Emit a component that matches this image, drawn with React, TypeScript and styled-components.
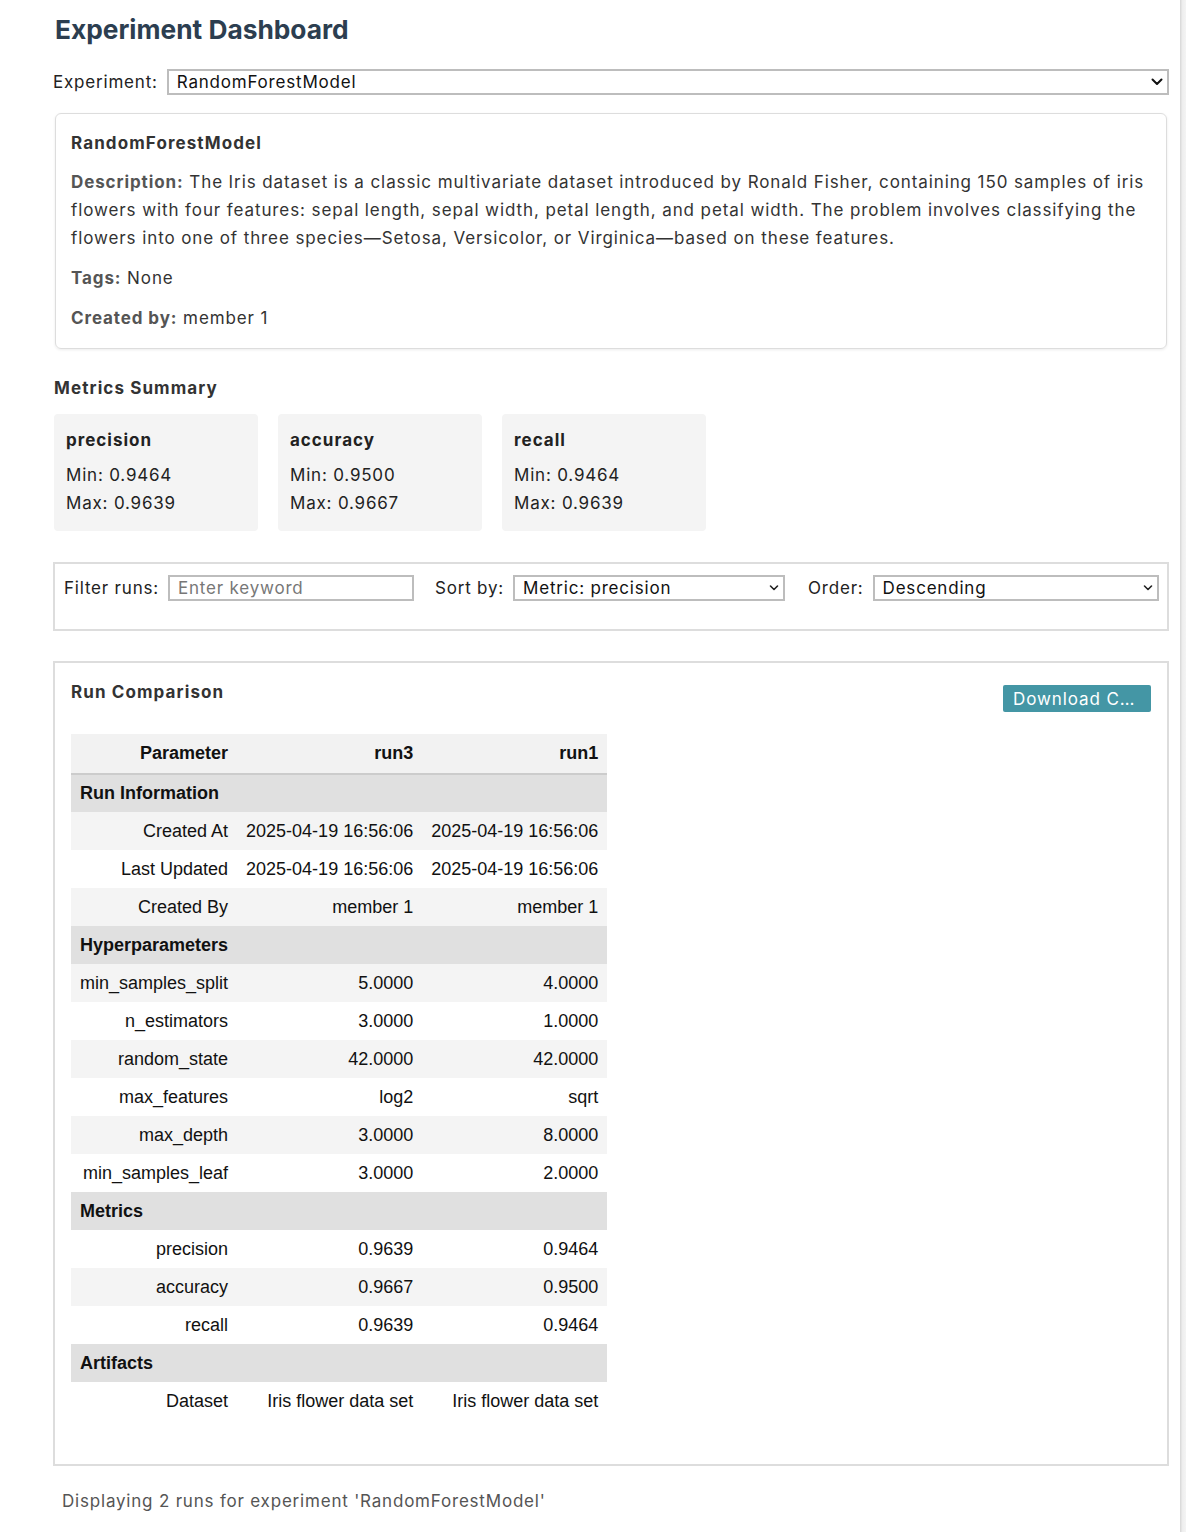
import React from "react";
import styled, { createGlobalStyle } from "styled-components";

const GlobalStyle = createGlobalStyle`
  html, body { margin: 0; padding: 0; background: #fff; }
  body { font-family: Inter, "Open Sans", sans-serif; color: #333; }
  * { box-sizing: border-box; }
`;

const ScrollEdge = styled.div`
  position: fixed;
  top: 0;
  right: 0;
  bottom: 0;
  width: 6px;
  background: linear-gradient(to right, #d6d6d6, #eeeeee 40%, #f4f4f4);
`;

const Page = styled.div`
  padding: 14px 17px 18px 53px;
  width: 1186px;
`;

const Title = styled.h1`
  margin: 0 0 23px 2px;
  font-size: 26.3px;
  line-height: 32px;
  font-weight: 700;
  color: #2c3e50;
`;

const Row = styled.div`
  display: flex;
  align-items: center;
  gap: 9px;
`;

const Label = styled.label`
  font-size: 17px;
  letter-spacing: 0.8px;
  color: #222;
  white-space: nowrap;
`;

const SelectWrap = styled.div<{ $w?: number; $flex?: boolean }>`
  position: relative;
  height: 26px;
  ${(p) => (p.$flex ? "flex: 1;" : `width: ${p.$w}px;`)}
`;

const Select = styled.select`
  appearance: none;
  width: 100%;
  height: 100%;
  border: 2px solid #bdbdbd;
  border-radius: 0;
  background: #fff;
  padding: 0 24px 0 8px;
  font-family: Inter, sans-serif;
  font-size: 17px;
  letter-spacing: 0.8px;
  color: #111;
  outline: none;
`;

const Chevron = styled.svg`
  position: absolute;
  right: 6px;
  top: 50%;
  transform: translateY(-50%);
  pointer-events: none;
`;

const Card = styled.div`
  margin: 18px 2px 25px 2px;
  border: 1px solid #ddd;
  border-radius: 6px;
  box-shadow: 0 1px 3px rgba(0, 0, 0, 0.08);
  padding: 15px 15px 16px 15px;
`;

const CardTitle = styled.h3`
  margin: 0 0 11px 0;
  font-size: 17px;
  letter-spacing: 1.1px;
  line-height: 28px;
  font-weight: 700;
  color: #333;
`;

const Para = styled.p`
  margin: 0 0 12px 0;
  font-size: 17px;
  letter-spacing: 0.9px;
  line-height: 28px;
  color: #333;
  &:last-child { margin-bottom: 0; }
`;

const Strong = styled.strong`
  color: #555;
  font-weight: 700;
`;

const SectionTitle = styled.h3`
  margin: 0 0 12px 1px;
  font-size: 17px;
  letter-spacing: 1.1px;
  line-height: 28px;
  font-weight: 700;
  color: #333;
`;

const MetricGrid = styled.div`
  display: flex;
  gap: 20px;
  margin: 0 0 31px 1px;
`;

const MetricCard = styled.div`
  width: 204px;
  background: #f4f4f4;
  border-radius: 4px;
  padding: 12px 12px 14px 12px;
`;

const MetricName = styled.div`
  font-size: 17px;
  letter-spacing: 1px;
  line-height: 28px;
  font-weight: 700;
  color: #222;
  margin-bottom: 7px;
`;

const MetricLine = styled.div`
  font-size: 17px;
  letter-spacing: 0.8px;
  line-height: 28px;
  color: #222;
`;

const FilterBar = styled.div`
  display: flex;
  align-items: center;
  border: 2px solid #ddd;
  padding: 11px 10px 28px 9px;
  margin-bottom: 30px;
`;

const FilterGroup = styled.div<{ $gapAfter?: number }>`
  display: flex;
  align-items: center;
  gap: 9px;
  margin-right: ${(p) => p.$gapAfter ?? 0}px;
`;

const TextInput = styled.input`
  width: 246px;
  height: 26px;
  border: 2px solid #bdbdbd;
  padding: 0 8px;
  font-family: Inter, sans-serif;
  font-size: 17px;
  letter-spacing: 0.8px;
  color: #111;
  outline: none;
  &::placeholder { color: #777; }
`;

const Panel = styled.div`
  border: 2px solid #ddd;
  padding: 15px 16px 44px 16px;
`;

const PanelHead = styled.div`
  display: flex;
  justify-content: space-between;
  align-items: flex-start;
  margin-bottom: 22px;
`;

const PanelTitle = styled.h3`
  margin: 0;
  font-size: 17px;
  letter-spacing: 1.1px;
  line-height: 28px;
  font-weight: 700;
  color: #333;
`;

const DownloadButton = styled.button`
  margin-top: 7px;
  width: 148px;
  height: 27px;
  background: #4496a5;
  color: #fff;
  border: none;
  border-radius: 2px;
  font-family: Inter, sans-serif;
  font-size: 17px;
  letter-spacing: 0.9px;
  padding: 0 10px;
  text-align: left;
  white-space: nowrap;
  overflow: hidden;
  text-overflow: ellipsis;
`;

const Table = styled.table`
  border-collapse: collapse;
  font-family: "Liberation Sans", Arial, sans-serif;
  font-size: 18px;
  color: #111;
`;

const Th = styled.th`
  height: 40px;
  padding: 0 9px;
  text-align: right;
  font-weight: 700;
  background: #f2f2f2;
  border-bottom: 2px solid #ccc;
  white-space: nowrap;
`;

const Tr = styled.tr<{ $striped?: boolean }>`
  background: ${(p) => (p.$striped ? "#f4f4f4" : "#fff")};
`;

const Td = styled.td`
  height: 38px;
  padding: 0 9px;
  text-align: right;
  white-space: nowrap;
`;

const SectionCell = styled.td`
  height: 38px;
  padding: 0 9px;
  text-align: left;
  font-weight: 700;
  background: #e0e0e0;
`;

const Footer = styled.div`
  margin: 21px 0 0 9px;
  font-size: 17px;
  letter-spacing: 0.8px;
  line-height: 28px;
  color: #555;
`;

const ChevronIcon = () => (
  <Chevron width="12" height="8" viewBox="0 0 12 8">
    <path d="M1.5 1.5 L6 6 L10.5 1.5" fill="none" stroke="#111" strokeWidth="2" strokeLinecap="round" strokeLinejoin="round" />
  </Chevron>
);

const SmallChevron = () => (
  <Chevron width="10" height="7" viewBox="0 0 10 7">
    <path d="M1.5 1.5 L5 5 L8.5 1.5" fill="none" stroke="#222" strokeWidth="1.6" strokeLinecap="round" strokeLinejoin="round" />
  </Chevron>
);

type Section = { title: string; rows: [string, string, string][] };

const sections: Section[] = [
  {
    title: "Run Information",
    rows: [
      ["Created At", "2025-04-19 16:56:06", "2025-04-19 16:56:06"],
      ["Last Updated", "2025-04-19 16:56:06", "2025-04-19 16:56:06"],
      ["Created By", "member 1", "member 1"],
    ],
  },
  {
    title: "Hyperparameters",
    rows: [
      ["min_samples_split", "5.0000", "4.0000"],
      ["n_estimators", "3.0000", "1.0000"],
      ["random_state", "42.0000", "42.0000"],
      ["max_features", "log2", "sqrt"],
      ["max_depth", "3.0000", "8.0000"],
      ["min_samples_leaf", "3.0000", "2.0000"],
    ],
  },
  {
    title: "Metrics",
    rows: [
      ["precision", "0.9639", "0.9464"],
      ["accuracy", "0.9667", "0.9500"],
      ["recall", "0.9639", "0.9464"],
    ],
  },
  {
    title: "Artifacts",
    rows: [["Dataset", "Iris flower data set", "Iris flower data set"]],
  },
];

const metrics = [
  { name: "precision", min: "0.9464", max: "0.9639" },
  { name: "accuracy", min: "0.9500", max: "0.9667" },
  { name: "recall", min: "0.9464", max: "0.9639" },
];

export default function App() {
  let idx = 0;
  const body: React.ReactNode[] = [];
  sections.forEach((s) => {
    idx += 1;
    body.push(
      <Tr key={s.title}>
        <SectionCell colSpan={3}>{s.title}</SectionCell>
      </Tr>
    );
    s.rows.forEach((r) => {
      idx += 1;
      body.push(
        <Tr key={s.title + r[0]} $striped={idx % 2 === 0}>
          <Td>{r[0]}</Td>
          <Td>{r[1]}</Td>
          <Td>{r[2]}</Td>
        </Tr>
      );
    });
  });

  return (
    <>
      <GlobalStyle />
      <ScrollEdge />
      <Page>
        <Title>Experiment Dashboard</Title>
        <Row>
          <Label>Experiment:</Label>
          <SelectWrap $flex>
            <Select defaultValue="rf">
              <option value="rf">RandomForestModel</option>
            </Select>
            <ChevronIcon />
          </SelectWrap>
        </Row>

        <Card>
          <CardTitle>RandomForestModel</CardTitle>
          <Para>
            <Strong>Description:</Strong> The Iris dataset is a classic multivariate dataset introduced by Ronald
            Fisher, containing 150 samples of iris flowers with four features: sepal length, sepal width, petal
            length, and petal width. The problem involves classifying the flowers into one of three
            species—Setosa, Versicolor, or Virginica—based on these features.
          </Para>
          <Para>
            <Strong>Tags:</Strong> None
          </Para>
          <Para>
            <Strong>Created by:</Strong> member 1
          </Para>
        </Card>

        <SectionTitle>Metrics Summary</SectionTitle>
        <MetricGrid>
          {metrics.map((m) => (
            <MetricCard key={m.name}>
              <MetricName>{m.name}</MetricName>
              <MetricLine>Min: {m.min}</MetricLine>
              <MetricLine>Max: {m.max}</MetricLine>
            </MetricCard>
          ))}
        </MetricGrid>

        <FilterBar>
          <FilterGroup $gapAfter={21}>
            <Label>Filter runs:</Label>
            <TextInput placeholder="Enter keyword" />
          </FilterGroup>
          <FilterGroup $gapAfter={23}>
            <Label>Sort by:</Label>
            <SelectWrap $w={272}>
              <Select defaultValue="p">
                <option value="p">Metric: precision</option>
              </Select>
              <SmallChevron />
            </SelectWrap>
          </FilterGroup>
          <FilterGroup>
            <Label>Order:</Label>
            <SelectWrap $w={286}>
              <Select defaultValue="d">
                <option value="d">Descending</option>
              </Select>
              <SmallChevron />
            </SelectWrap>
          </FilterGroup>
        </FilterBar>

        <Panel>
          <PanelHead>
            <PanelTitle>Run Comparison</PanelTitle>
            <DownloadButton>Download CSV</DownloadButton>
          </PanelHead>
          <Table>
            <thead>
              <tr>
                <Th>Parameter</Th>
                <Th>run3</Th>
                <Th>run1</Th>
              </tr>
            </thead>
            <tbody>{body}</tbody>
          </Table>
        </Panel>

        <Footer>Displaying 2 runs for experiment 'RandomForestModel'</Footer>
      </Page>
    </>
  );
}
